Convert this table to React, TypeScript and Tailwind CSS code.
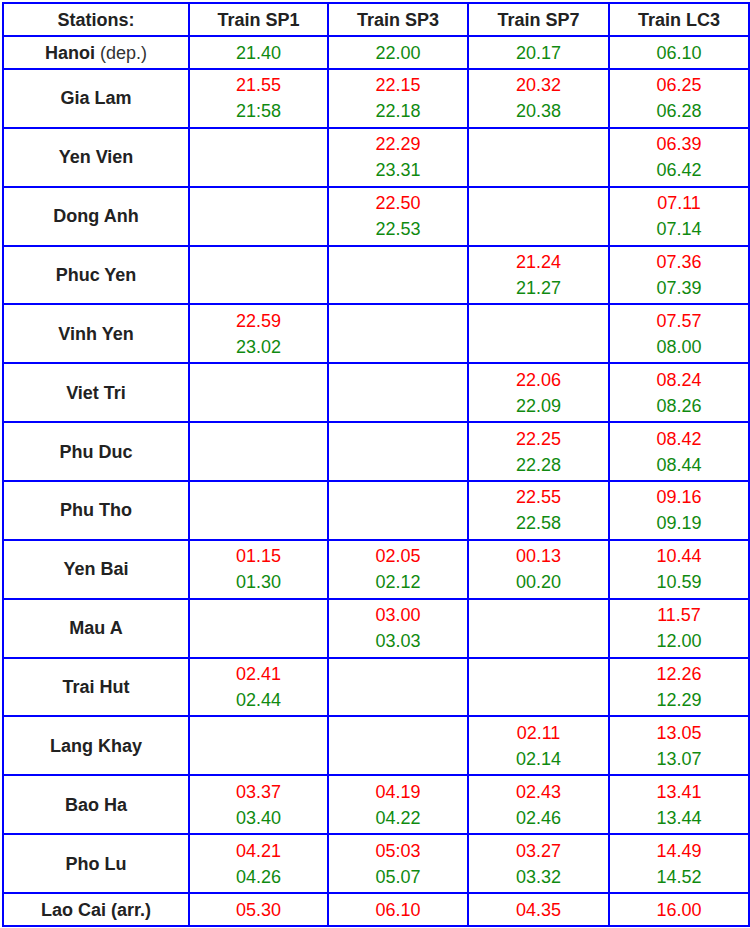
type Stop = [string, string] | [string] | null;

interface Row {
  station: string;
  note?: string;
  noteBold?: boolean;
  stops: Stop[];
  single?: "dep" | "arr";
}

const trains = ["Train SP1", "Train SP3", "Train SP7", "Train LC3"];

const rows: Row[] = [
  { station: "Hanoi", note: "(dep.)", single: "dep", stops: [["21.40"], ["22.00"], ["20.17"], ["06.10"]] },
  { station: "Gia Lam", stops: [["21.55", "21:58"], ["22.15", "22.18"], ["20.32", "20.38"], ["06.25", "06.28"]] },
  { station: "Yen Vien", stops: [null, ["22.29", "23.31"], null, ["06.39", "06.42"]] },
  { station: "Dong Anh", stops: [null, ["22.50", "22.53"], null, ["07.11", "07.14"]] },
  { station: "Phuc Yen", stops: [null, null, ["21.24", "21.27"], ["07.36", "07.39"]] },
  { station: "Vinh Yen", stops: [["22.59", "23.02"], null, null, ["07.57", "08.00"]] },
  { station: "Viet Tri", stops: [null, null, ["22.06", "22.09"], ["08.24", "08.26"]] },
  { station: "Phu Duc", stops: [null, null, ["22.25", "22.28"], ["08.42", "08.44"]] },
  { station: "Phu Tho", stops: [null, null, ["22.55", "22.58"], ["09.16", "09.19"]] },
  { station: "Yen Bai", stops: [["01.15", "01.30"], ["02.05", "02.12"], ["00.13", "00.20"], ["10.44", "10.59"]] },
  { station: "Mau A", stops: [null, ["03.00", "03.03"], null, ["11.57", "12.00"]] },
  { station: "Trai Hut", stops: [["02.41", "02.44"], null, null, ["12.26", "12.29"]] },
  { station: "Lang Khay", stops: [null, null, ["02.11", "02.14"], ["13.05", "13.07"]] },
  { station: "Bao Ha", stops: [["03.37", "03.40"], ["04.19", "04.22"], ["02.43", "02.46"], ["13.41", "13.44"]] },
  { station: "Pho Lu", stops: [["04.21", "04.26"], ["05:03", "05.07"], ["03.27", "03.32"], ["14.49", "14.52"]] },
  { station: "Lao Cai", note: "(arr.)", noteBold: true, single: "arr", stops: [["05.30"], ["06.10"], ["04.35"], ["16.00"]] },
];

const cell = "border-2 border-[#0000ff] text-center align-middle p-0";

function TimeCell({ stop, single }: { stop: Stop; single?: "dep" | "arr" }) {
  if (!stop) return <td className={cell} />;
  if (single) {
    return (
      <td className={cell}>
        <span className={single === "dep" ? "text-[#108a10]" : "text-[#ff0000]"}>{stop[0]}</span>
      </td>
    );
  }
  return (
    <td className={cell}>
      <div className="text-[#ff0000]">{stop[0]}</div>
      <div className="text-[#108a10]">{stop[1]}</div>
    </td>
  );
}

export default function App() {
  return (
    <div className="w-[750px] h-[928px] bg-white pt-[2px] pl-[2px] overflow-hidden font-['Liberation_Sans',Arial,sans-serif] text-[18px] leading-[26px]">
      <table className="table-fixed border-collapse w-[746px]">
        <colgroup>
          <col className="w-[186px]" />
          <col className="w-[139px]" />
          <col className="w-[140px]" />
          <col className="w-[141px]" />
          <col className="w-[140px]" />
        </colgroup>
        <thead>
          <tr className="h-[33px]">
            <th className={`${cell} font-bold text-[#222]`}>Stations:</th>
            {trains.map((t) => (
              <th key={t} className={`${cell} font-bold text-[#222]`}>
                {t}
              </th>
            ))}
          </tr>
        </thead>
        <tbody>
          {rows.map((r) => (
            <tr key={r.station} className={r.single ? "h-[33px]" : "h-[58.86px]"}>
              <td className={`${cell} font-bold text-[#222]`}>
                {r.station}
                {r.note && (
                  <span className={r.noteBold ? "" : "font-normal text-[#333]"}> {r.note}</span>
                )}
              </td>
              {r.stops.map((s, i) => (
                <TimeCell key={i} stop={s} single={r.single} />
              ))}
            </tr>
          ))}
        </tbody>
      </table>
    </div>
  );
}
